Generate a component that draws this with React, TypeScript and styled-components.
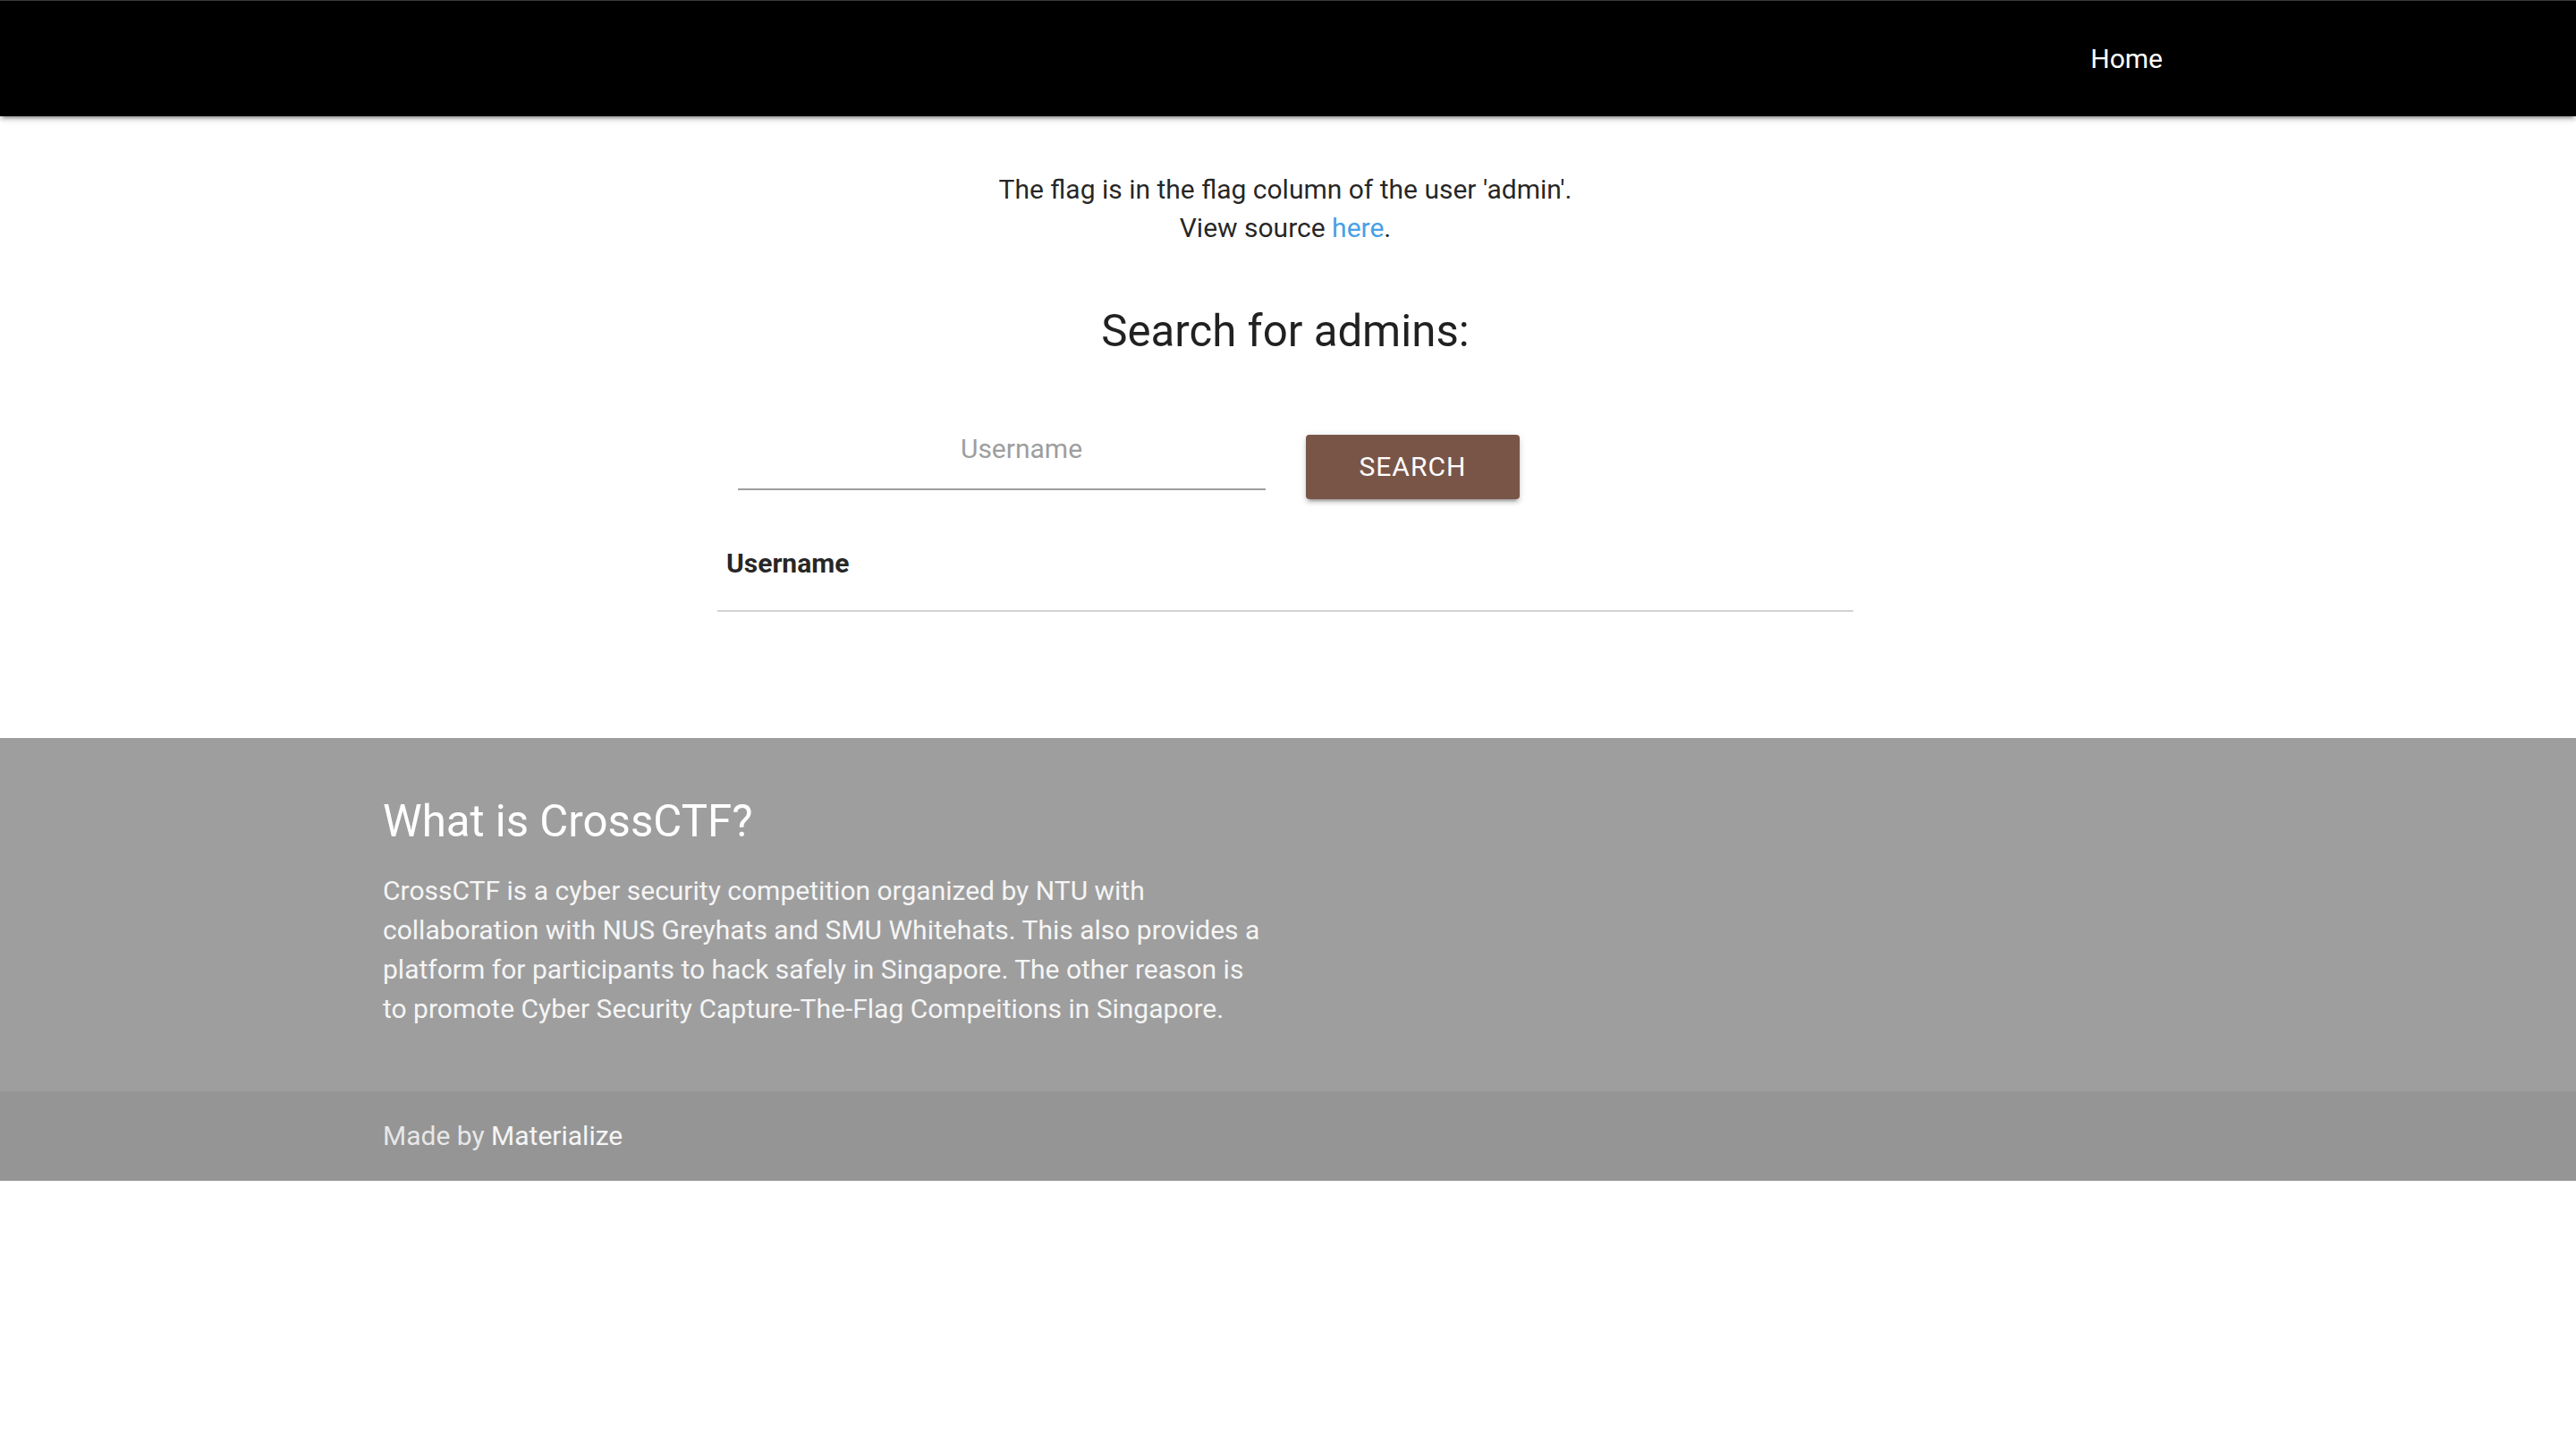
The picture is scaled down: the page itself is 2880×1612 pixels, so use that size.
import React from "react";
import styled, { createGlobalStyle } from "styled-components";

const GlobalStyle = createGlobalStyle`
  html, body {
    margin: 0;
    padding: 0;
    background: #ffffff;
  }
  body {
    font-family: Roboto, "Noto Sans", Arial, sans-serif;
    font-size: 30px;
    color: rgba(0, 0, 0, 0.87);
  }
  * { box-sizing: border-box; }
`;

const NavBar = styled.nav`
  background: #000000;
  border-top: 1px solid #3a3a3a;
  height: 130px;
  box-shadow: 0 4px 4px 0 rgba(0, 0, 0, 0.14), 0 2px 10px 0 rgba(0, 0, 0, 0.12),
    0 6px 2px -4px rgba(0, 0, 0, 0.2);
  position: relative;
  z-index: 2;
`;

const NavInner = styled.div`
  width: 2016px;
  margin: 0 auto;
  display: flex;
  justify-content: flex-end;
  align-items: center;
  height: 100%;
`;

const NavLink = styled.a`
  color: #ffffff;
  text-decoration: none;
  font-size: 30px;
  line-height: 128px;
  padding: 0 30px;
`;

const Main = styled.main`
  width: 2016px;
  margin-left: calc(50% - 1011px);
  padding-top: 60px;
  padding-bottom: 141px;
  text-align: center;
`;

const Intro = styled.p`
  margin: 0;
  font-size: 30px;
  line-height: 43px;
  color: rgba(0, 0, 0, 0.87);
`;

const Link = styled.a`
  color: #479fe6;
  text-decoration: none;
`;

const Heading = styled.h5<{ $light?: boolean; $top: number }>`
  font-size: 49.2px;
  font-weight: 400;
  line-height: 1.1;
  margin: ${(p) => p.$top}px 0 0;
  color: ${(p) => (p.$light ? "#ffffff" : "rgba(0, 0, 0, 0.87)")};
`;

const FormRow = styled.form`
  width: 1270px;
  margin: 59px auto 0;
  display: grid;
  grid-template-columns: 1fr 1fr;
`;

const InputCol = styled.div`
  padding: 0 22.5px;
`;

const ButtonCol = styled.div`
  padding: 30px 22.5px 0;
  text-align: left;
`;

const TextInput = styled.input`
  display: block;
  width: 100%;
  height: 92px;
  border: none;
  border-bottom: 2px solid #9e9e9e;
  background: transparent;
  outline: none;
  font-family: Roboto, "Noto Sans", Arial, sans-serif;
  font-size: 30px;
  text-align: center;
  padding: 0 0 0 45px;
  color: rgba(0, 0, 0, 0.87);
  &::placeholder {
    color: #9e9e9e;
  }
`;

const SearchButton = styled.button`
  height: 72px;
  padding: 0 60px;
  border: none;
  border-radius: 4px;
  background: #795548;
  color: #ffffff;
  font-family: Roboto, "Noto Sans", Arial, sans-serif;
  font-size: 30px;
  letter-spacing: 1px;
  text-transform: uppercase;
  line-height: 72px;
  cursor: pointer;
  box-shadow: 0 4px 4px 0 rgba(0, 0, 0, 0.14), 0 2px 10px 0 rgba(0, 0, 0, 0.12),
    0 6px 2px -4px rgba(0, 0, 0, 0.2);
`;

const Table = styled.table`
  width: 1270px;
  margin: 20px auto 0;
  border-collapse: collapse;
`;

const HeadCell = styled.th`
  text-align: left;
  padding: 30px 10px;
  font-size: 30px;
  line-height: 44px;
  font-weight: 700;
  color: rgba(0, 0, 0, 0.87);
  border-bottom: 2px solid #d3d3d3;
`;

const Footer = styled.footer`
  background: #9e9e9e;
  padding-top: 40px;
`;

const FooterContent = styled.div`
  width: 2016px;
  margin-left: calc(50% - 1012px);
  padding-bottom: 70px;
`;

const FooterText = styled.p`
  width: 990px;
  margin: 29px 0 0;
  font-size: 30px;
  line-height: 44px;
  color: #f5f5f5;
`;

const Copyright = styled.div`
  background: #959595;
  height: 100px;
  padding-top: 2px;
`;

const CopyrightInner = styled.div`
  width: 2016px;
  margin-left: calc(50% - 1012px);
  font-size: 30px;
  line-height: 95px;
  color: rgba(255, 255, 255, 0.8);
`;

const CopyrightLink = styled.a`
  color: #f5f5f5;
  text-decoration: none;
`;

export default function App() {
  return (
    <>
      <GlobalStyle />
      <NavBar>
        <NavInner>
          <NavLink href="#">Home</NavLink>
        </NavInner>
      </NavBar>
      <Main>
        <Intro>
          The flag is in the flag column of the user 'admin'.
          <br />
          View source <Link href="#">here</Link>.
        </Intro>
        <Heading $top={67}>Search for admins:</Heading>
        <FormRow onSubmit={(e) => e.preventDefault()}>
          <InputCol>
            <TextInput type="text" placeholder="Username" />
          </InputCol>
          <ButtonCol>
            <SearchButton type="submit">Search</SearchButton>
          </ButtonCol>
        </FormRow>
        <Table>
          <thead>
            <tr>
              <HeadCell>Username</HeadCell>
            </tr>
          </thead>
          <tbody />
        </Table>
      </Main>
      <Footer>
        <FooterContent>
          <Heading $light $top={26}>
            What is CrossCTF?
          </Heading>
          <FooterText>
            CrossCTF is a cyber security competition organized by NTU with collaboration with
            NUS Greyhats and SMU Whitehats. This also provides a platform for participants to
            hack safely in Singapore. The other reason is to promote Cyber Security
            Capture-The-Flag Compeitions in Singapore.
          </FooterText>
        </FooterContent>
        <Copyright>
          <CopyrightInner>
            Made by <CopyrightLink href="#">Materialize</CopyrightLink>
          </CopyrightInner>
        </Copyright>
      </Footer>
    </>
  );
}
